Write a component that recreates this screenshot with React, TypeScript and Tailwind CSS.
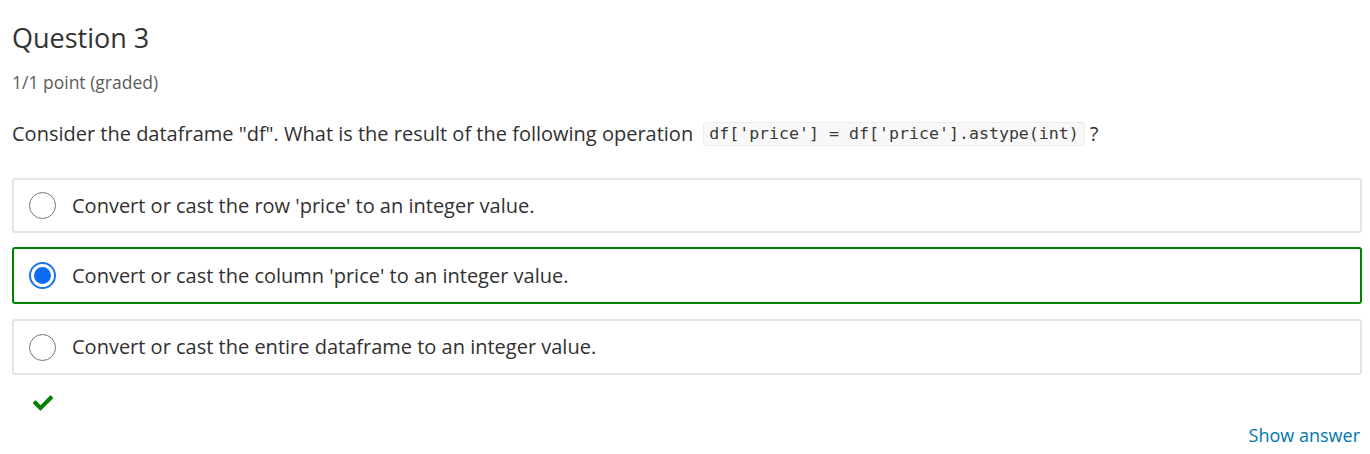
import React from 'react';
import { FaCheck } from 'react-icons/fa';

const options = [
  { id: 'a', label: "Convert or cast the row 'price' to an integer value.", checked: false, box: 'h-[55px]' },
  { id: 'b', label: "Convert or cast the column 'price' to an integer value.", checked: true, box: 'mt-[14px] h-[57px]' },
  { id: 'c', label: 'Convert or cast the entire dataframe to an integer value.', checked: false, box: 'mt-[15px] h-[56px]' },
];

function Radio({ checked }: { checked: boolean }) {
  if (checked) {
    return (
      <span className="flex h-[27px] w-[27px] shrink-0 items-center justify-center rounded-full border-2 border-[#1a73e8] bg-white">
        <span className="h-[17px] w-[17px] rounded-full bg-[#0b6cf3]" />
      </span>
    );
  }
  return <span className="h-[27px] w-[27px] shrink-0 rounded-full border border-[#767676] bg-white" />;
}

export default function App() {
  return (
    <div className="min-h-[454px] bg-white pl-3 pr-2 pt-[22px] font-['Open_Sans',sans-serif] text-[#313131]">
      <h3 className="text-[27px] leading-[32px] text-[#333]">Question 3</h3>
      <div className="mt-[17px] text-[17.5px] leading-[22px] text-[#5b5b5b]">1/1 point (graded)</div>

      <p className="mt-[27px] flex items-center text-[20px] leading-[28px]">
        <span>Consider the dataframe "df". What is the result of the following operation</span>
        <code className="ml-[10px] mr-[5px] rounded-[3px] border border-[#ececec] bg-[#f8f8f8] px-[5px] py-[1px] font-['DejaVu_Sans_Mono',monospace] text-[16.6px] leading-[20px] text-[#3a3a3a]">
          df['price'] = df['price'].astype(int)
        </code>
        <span>?</span>
      </p>

      <div className="mt-[30px] flex flex-col">
        {options.map((o) => (
          <label
            key={o.id}
            className={`flex items-center gap-[16px] rounded-[3px] ${o.box} ${
              o.checked ? 'border-2 border-[#008100] pl-[15px]' : 'border-2 border-[#e4e4e4] pl-[15px]'
            }`}
          >
            <Radio checked={o.checked} />
            <span className="text-[20px] leading-[26px] text-[#313131]">{o.label}</span>
          </label>
        ))}
      </div>

      <div className="mt-[18px] pl-[21px] text-[#008100]">
        <FaCheck size={20} />
      </div>

      <div className="mt-[10px] flex justify-end pr-[2px]">
        <button className="text-[18px] leading-[24px] text-[#0075b4]">Show answer</button>
      </div>
    </div>
  );
}
